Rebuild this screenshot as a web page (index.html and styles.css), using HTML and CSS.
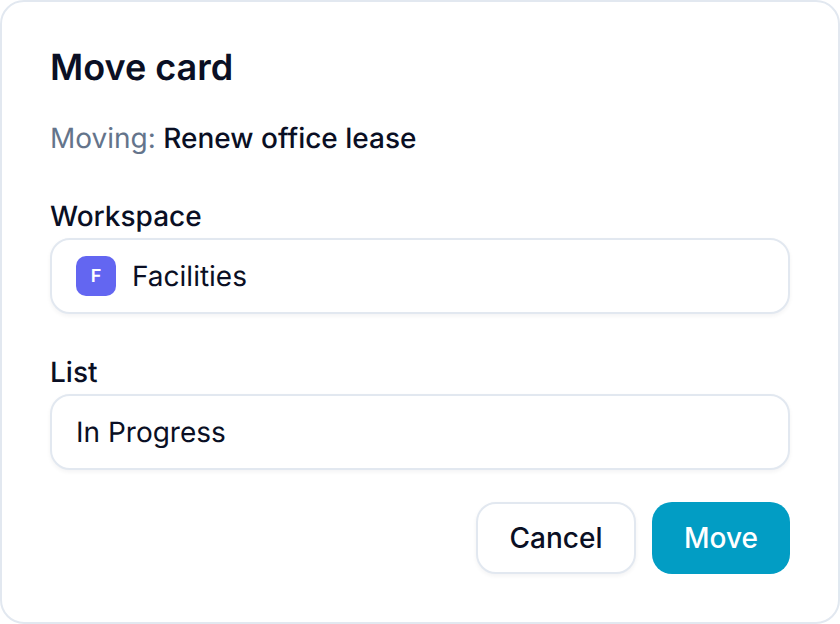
FILE: index.html
```html
<!DOCTYPE html>
<html lang="en">
<head>
<meta charset="utf-8">
<title>Move card</title>
<link rel="stylesheet" href="styles.css">
</head>
<body>
<main class="card">
  <h1 class="title">Move card</h1>
  <p class="moving"><span class="moving-label">Moving:</span> Renew office lease</p>
  <div class="field">
    <div class="label">Workspace</div>
    <div class="input">
      <span class="badge">F</span>
      <span>Facilities</span>
    </div>
  </div>
  <div class="field">
    <div class="label">List</div>
    <div class="input">In Progress</div>
  </div>
  <div class="actions">
    <button class="btn btn-cancel">Cancel</button>
    <button class="btn btn-move">Move</button>
  </div>
</main>
</body>
</html>
```
FILE: styles.css
```css
* { box-sizing: border-box; }
html, body { margin: 0; padding: 0; background: #ffffff; }
body {
  width: 840px;
  height: 624px;
  font-family: Inter, "Liberation Sans", sans-serif;
  color: #0a0f24;
  text-rendering: geometricPrecision;
}
.card {
  width: 840px;
  height: 624px;
  border: 2px solid #e2e8f0;
  border-radius: 24px;
  background: #ffffff;
  padding: 43px 48px 0;
  display: flex;
  flex-direction: column;
}
.title {
  margin: 0;
  font-size: 36px;
  line-height: 44px;
  font-weight: 600;
  color: #0a0f24;
}
.moving {
  margin: 31px 0 0;
  font-size: 28px;
  line-height: 36px;
  font-weight: 500;
  color: #0a0f24;
}
.moving-label { color: #64748b; font-weight: 400; }
.field { margin-top: 43px; }
.field + .field { margin-top: 41px; }
.label {
  font-size: 28px;
  line-height: 34px;
  font-weight: 500;
  margin-bottom: 5px;
}
.input {
  height: 76px;
  border: 2px solid #e2e8f0;
  border-radius: 20px;
  background: #ffffff;
  box-shadow: 0 2px 4px rgba(15, 23, 42, 0.05);
  padding: 0 24px;
  display: flex;
  align-items: center;
  gap: 16px;
  font-size: 28px;
}
.badge {
  width: 40px;
  height: 40px;
  border-radius: 10px;
  background: #6366f1;
  color: #ffffff;
  font-size: 18px;
  font-weight: 600;
  display: flex;
  align-items: center;
  justify-content: center;
}
.actions {
  margin-top: 32px;
  display: flex;
  justify-content: flex-end;
  gap: 16px;
}
.btn {
  height: 72px;
  border-radius: 20px;
  font-family: inherit;
  font-size: 28px;
  font-weight: 500;
  padding: 0;
}
.btn-cancel {
  width: 160px;
  background: #ffffff;
  color: #0a0f24;
  border: 2px solid #e2e8f0;
  box-shadow: 0 2px 4px rgba(15, 23, 42, 0.05);
}
.btn-move {
  width: 138px;
  background: #029dc4;
  color: #ffffff;
  border: 0;
}
```
